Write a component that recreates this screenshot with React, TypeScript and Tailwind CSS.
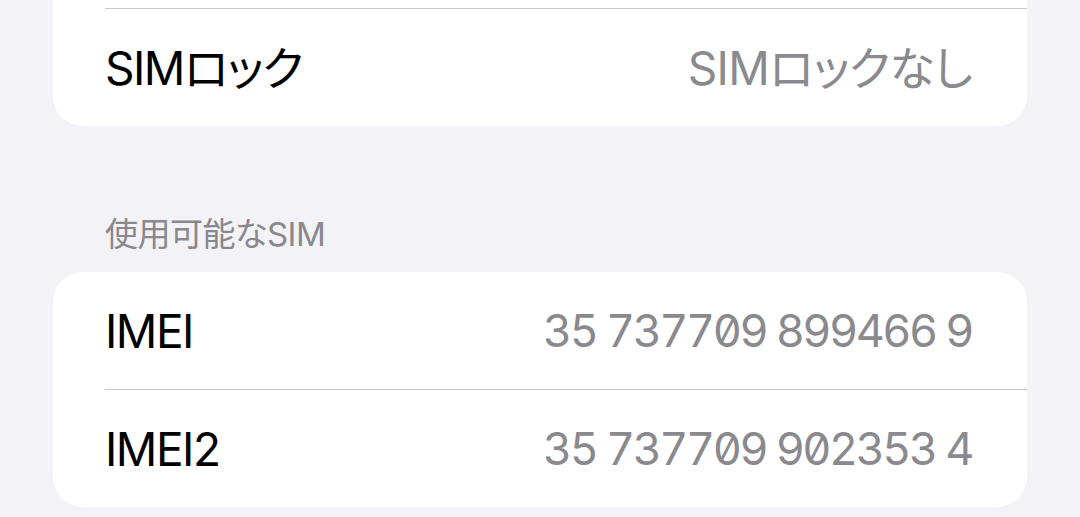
type Row = { label: string; value: string; mono?: boolean };

const lockRow: Row = { label: "SIMロック", value: "SIMロックなし" };

const simRows: Row[] = [
    { label: "IMEI", value: "35 737709 899466 9", mono: true },
    { label: "IMEI2", value: "35 737709 902353 4", mono: true },
];

function SettingsRow({ row, divider }: { row: Row; divider?: boolean }) {
    return (
        <div className="flex flex-col">
            {divider && <div className="ml-[52px] h-px bg-[#c8c8cc]" />}
            <div className="flex h-[117px] items-center justify-between pl-[52px] pr-[55px]">
                <span className="text-[46px] tracking-[-1.5px] text-black [font-feature-settings:'palt']">{row.label}</span>
                {row.mono ? (
                    <span className="text-[45px] tracking-[-2.5px] text-[#8a8a8e] [font-feature-settings:'tnum','zero']">
                        {row.value}
                    </span>
                ) : (
                    <span className="text-[46px] tracking-[-0.7px] text-[#8a8a8e] [font-feature-settings:'palt']">
                        {row.value}
                    </span>
                )}
            </div>
        </div>
    );
}

export default function App() {
    return (
        <div className="h-[517px] w-[1080px] overflow-hidden bg-[#f2f2f7] px-[53px] font-['Inter','Noto_Sans_CJK_JP',sans-serif] leading-none">
            {/* Tail of the previous group, cut off at the top */}
            <div className="rounded-b-[30px] bg-white pt-[8px]">
                <SettingsRow row={lockRow} divider />
            </div>

            {/* Section header */}
            <div className="pl-[52px] pt-[88px] pb-[18px] text-[33px] leading-[40px] tracking-[-0.5px] text-[#88888d] [font-feature-settings:'palt']">
                使用可能なSIM
            </div>

            <div className="rounded-[30px] bg-white">
                {simRows.map((row, i) => (
                    <SettingsRow key={row.label} row={row} divider={i > 0} />
                ))}
            </div>
        </div>
    );
}
